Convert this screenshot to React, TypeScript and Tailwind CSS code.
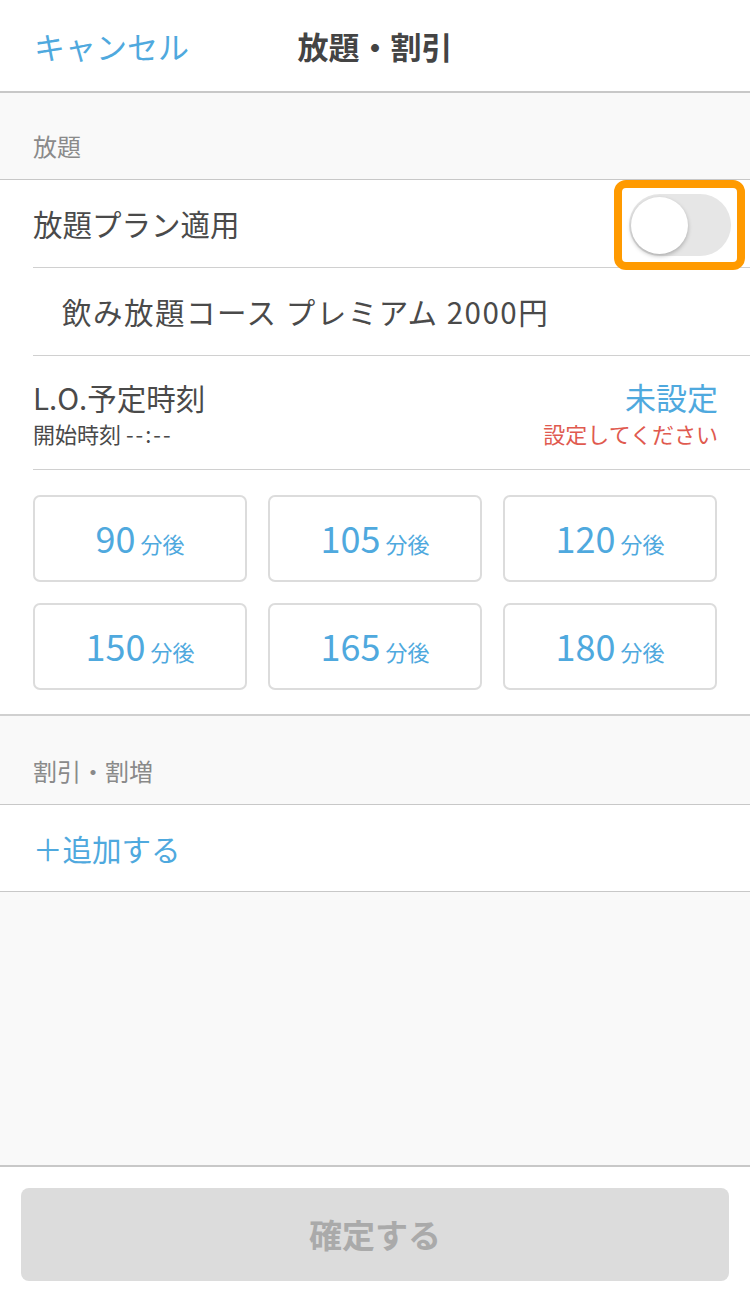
import { useState } from "react";

const font = { fontFamily: '"Noto Sans CJK JP", "Noto Sans", sans-serif' };

const presets = [90, 105, 120, 150, 165, 180];

export default function App() {
  const [applied, setApplied] = useState(false);

  return (
    <div className="w-[750px] h-[1298px] bg-white flex flex-col text-[#4a4a4a]" style={font}>
      {/* ヘッダー */}
      <div className="h-[93px] flex items-center relative border-b-2 border-[#c8c8c8] shrink-0">
        <button className="pl-[34px] text-[31px] text-[#4fa9de] leading-none">キャンセル</button>
        <div className="absolute left-0 right-0 text-center text-[31px] font-bold text-[#444] leading-none pointer-events-none">
          放題・割引
        </div>
      </div>

      {/* 放題 */}
      <div className="h-[87px] bg-[#f9f9f9] flex items-end pb-[15px] pl-[33px] text-[24px] text-[#8a8a8a] border-b border-[#c8c8c8] shrink-0">
        放題
      </div>

      <div className="pl-[33px]">
        <div className="h-[88px] flex items-center justify-between border-b border-[#d0d0d0]">
          <span className="text-[29.5px]">放題プラン適用</span>
          <div className="mr-[5px] mt-[3px] w-[131px] h-[90px] border-[8px] border-[#ff9a00] rounded-[12px] flex items-center justify-center">
            <button
              onClick={() => setApplied(!applied)}
              className={`w-[102px] h-[62px] rounded-full flex items-center px-[2px] ${
                applied ? "bg-[#4cd964] justify-end" : "bg-[#e6e6e6] justify-start"
              }`}
            >
              <span className="w-[57px] h-[57px] rounded-full bg-white shadow-[0_2px_4px_rgba(0,0,0,0.25)]" />
            </button>
          </div>
        </div>

        <div className="h-[88px] flex items-center pl-[29px] text-[29.5px] tracking-[1.5px] border-b border-[#d0d0d0]">
          飲み放題コース プレミアム 2000円
        </div>

        <div className="h-[114px] flex items-center justify-between pr-[32px] border-b border-[#d0d0d0]">
          <div className="flex flex-col gap-[6px]">
            <span className="text-[29.5px] leading-[34px]">L.O.予定時刻</span>
            <span className="text-[22px] leading-[26px]">
              開始時刻 <span className="tracking-[2px]">--:--</span>
            </span>
          </div>
          <div className="flex flex-col items-end gap-[6px]">
            <span className="text-[31px] leading-[34px] text-[#4fa9de]">未設定</span>
            <span className="text-[22px] leading-[26px] text-[#e05a4f]">設定してください</span>
          </div>
        </div>
      </div>

      <div className="px-[33px] pt-[25px] pb-[24px] grid grid-cols-3 gap-x-[21px] gap-y-[21px] border-b-2 border-[#d0d0d0]">
        {presets.map((m) => (
          <button
            key={m}
            className="h-[87px] border-2 border-[#dcdcdc] rounded-[7px] flex items-baseline justify-center text-[#4fa9de] pt-[22px]"
          >
            <span className="text-[36px] leading-none">{m}</span>
            <span className="text-[22px] leading-none ml-[5px]">分後</span>
          </button>
        ))}
      </div>

      {/* 割引・割増 */}
      <div className="h-[89px] bg-[#f9f9f9] flex items-end pb-[15px] pl-[33px] text-[24px] text-[#8a8a8a] border-b border-[#c8c8c8] shrink-0">
        割引・割増
      </div>
      <div className="h-[87px] flex items-center pl-[33px] text-[29.5px] text-[#4fa9de] border-b border-[#c8c8c8] shrink-0">
        ＋追加する
      </div>

      <div className="flex-1 bg-[#f9f9f9] border-b-2 border-[#c8c8c8]" />

      <div className="h-[131px] px-[21px] pt-[21px] shrink-0">
        <button className="w-full h-[93px] rounded-[8px] bg-[#dcdcdc] text-[33px] font-bold text-[#aaaaaa]">
          確定する
        </button>
      </div>
    </div>
  );
}
